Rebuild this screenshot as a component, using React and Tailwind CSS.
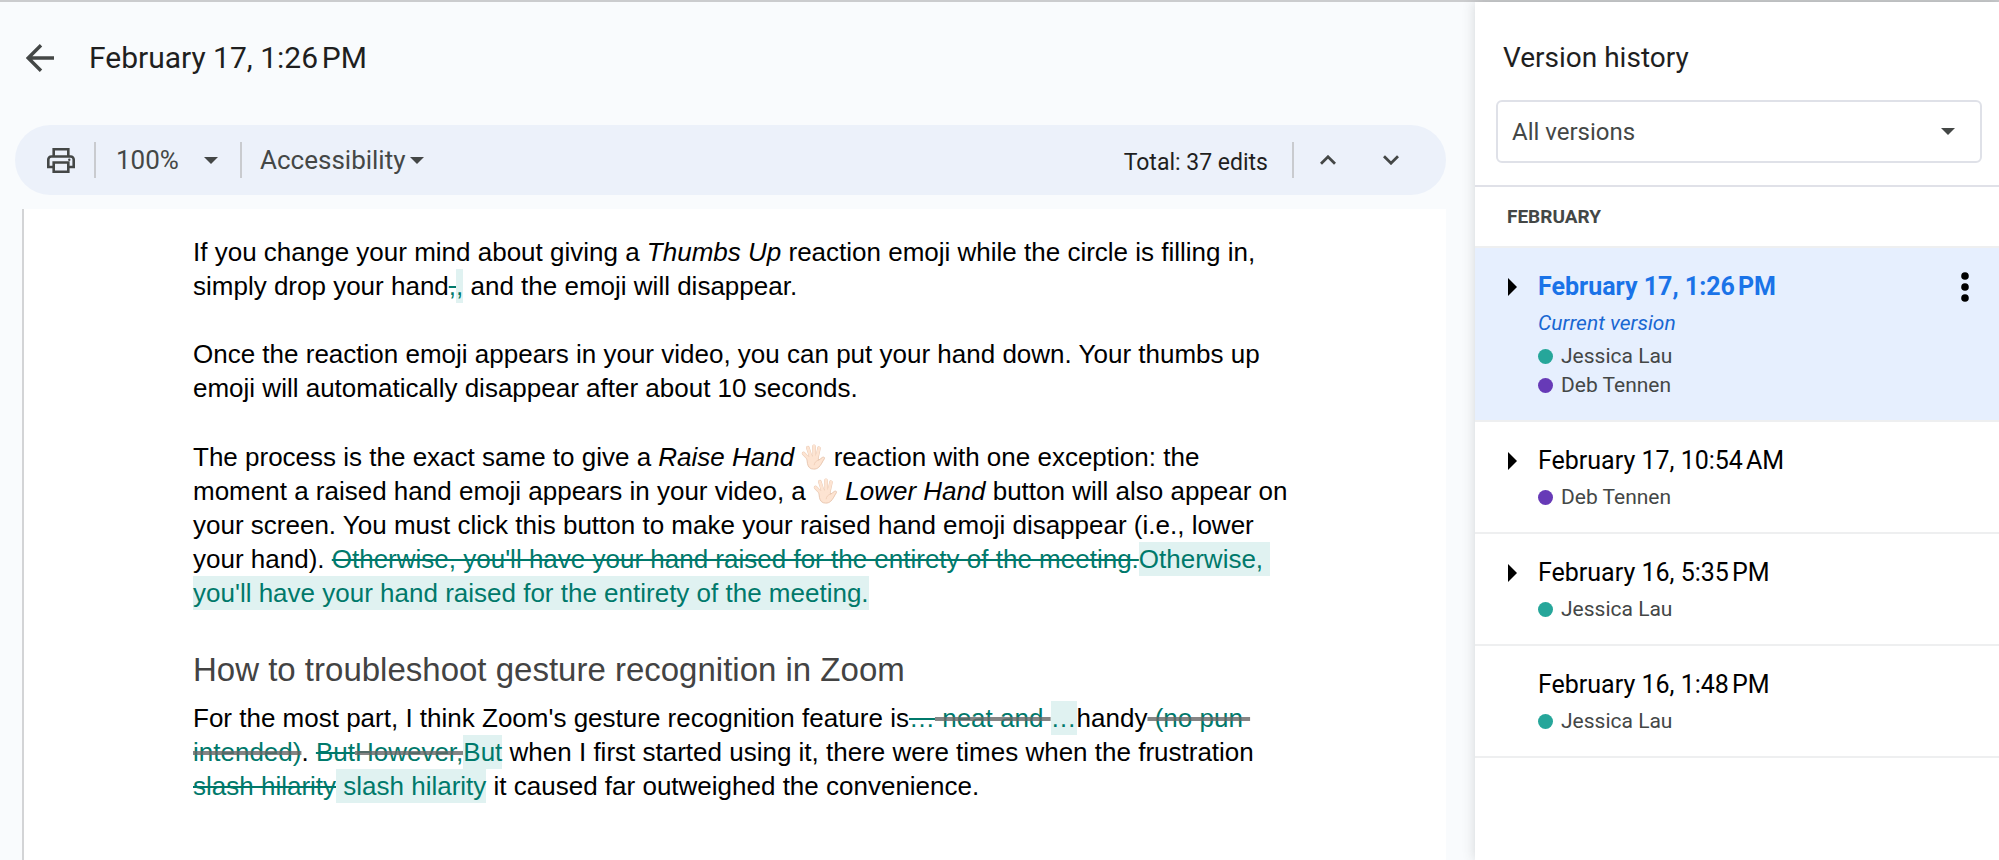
const uiFont = "font-['Roboto',sans-serif]";
const docFont = "font-['Liberation_Sans',Arial,sans-serif]";

const TEAL = "#26a69a";
const PURPLE = "#673ab7";

const versions = [
  { title: "February 17, 1:26\u202fPM", current: true, expandable: true, people: [["Jessica Lau", TEAL], ["Deb Tennen", PURPLE]] },
  { title: "February 17, 10:54\u202fAM", expandable: true, people: [["Deb Tennen", PURPLE]] },
  { title: "February 16, 5:35\u202fPM", expandable: true, people: [["Jessica Lau", TEAL]] },
  { title: "February 16, 1:48\u202fPM", expandable: false, people: [["Jessica Lau", TEAL]] },
];

function Caret({ className = "" }) {
  return (
    <svg viewBox="0 0 14 7" className={`h-[7px] w-[14px] shrink-0 ${className}`} fill="#444746" aria-hidden="true">
      <path d="M0 0h14L7 7z" />
    </svg>
  );
}

function Hand() {
  return (
    <svg viewBox="0 0 25 26" className="inline-block h-[26px] w-[25px] align-[-4px]" role="img" aria-label="raised hand">
      <g stroke="#e9c8b2" strokeLinecap="round" strokeLinejoin="round" fill="none">
        <path d="M7 14 2.600 9.400M9.500 12 6.800 3.600M13.200 11.500 13 2.200M16.200 12.500 18 4.200" strokeWidth="3.600" />
        <path d="M6 12.500 16.500 11.500 17.600 16.200C19 15.600 20.200 13.800 21.600 13.300c1.400-.5 2.500.4 1.800 1.400-1.900 2.700-3.200 6.300-5.600 8.500-1.500 1.400-3.200 1.900-5.100 1.900-3.600 0-5.600-2-6.200-5.400z" strokeWidth="1" fill="#fde4d2" />
      </g>
      <g stroke="#fde4d2" strokeLinecap="round" fill="none">
        <path d="M8 15 2.600 9.400M10 13.500 6.800 3.600M13.200 13.500 13 2.200M15.800 13.500 18 4.200" strokeWidth="2.800" />
      </g>
      <path d="M13.200 20.800c.3-2.300 1.700-4 4.300-4.700" fill="none" stroke="#ecc9b0" strokeWidth=".7" strokeLinecap="round" />
    </svg>
  );
}

function Divider() {
  return <span className="h-9 w-[2px] shrink-0 bg-[#c9cbcf]" aria-hidden="true" />;
}

function Ins({ children }) {
  return <ins className="bg-[#e0f2f1] py-[2px] text-[#00796b] no-underline">{children}</ins>;
}

function Del({ children, heavy }) {
  return heavy ? (
    <del className="text-[#00796b] line-through decoration-[#666666]/80 decoration-4">{children}</del>
  ) : (
    <del className="text-[#00796b] line-through decoration-[#00796b] decoration-2">{children}</del>
  );
}

function Toolbar() {
  return (
    <div role="toolbar" className="mr-[29px] ml-[15px] flex h-[70px] items-center rounded-full bg-[#ecf1fa] text-[26px] text-[#444746]">
      <button type="button" aria-label="Print" className="ml-8">
        <svg viewBox="0 0 28 25" className="h-[25px] w-7" fill="none" stroke="#444746" strokeWidth="2.600" aria-hidden="true">
          <path d="M6.700 8V1.300h14.600V8" />
          <path d="M6.500 19H1.300v-7.500a3 3 0 0 1 3-3h19.400a3 3 0 0 1 3 3V19h-5.200" />
          <path d="M6.700 14.500h14.600v9.200H6.700z" />
          <circle cx="22.300" cy="11.800" r="1.200" fill="#444746" stroke="none" />
        </svg>
      </button>
      <span className="ml-[19px] flex"><Divider /></span>
      <button type="button" aria-label="Zoom level" className="ml-5 flex items-center gap-5">
        <span className="w-[68px] text-left">100%</span>
        <Caret />
      </button>
      <span className="ml-[22px] flex"><Divider /></span>
      <button type="button" className="ml-[18px] flex items-center gap-1">
        Accessibility
        <Caret />
      </button>
      <span className="mt-1.5 ml-auto text-[23px] text-[#1f1f1f]">Total: 37 edits</span>
      <span className="ml-6 flex"><Divider /></span>
      <button type="button" aria-label="Previous edit" className="ml-[26px]">
        <svg viewBox="0 0 16 10" className="h-[10px] w-4" fill="none" stroke="#444746" strokeWidth="2.800" aria-hidden="true">
          <path d="M1 8.700 8 1.800l7 6.900" />
        </svg>
      </button>
      <button type="button" aria-label="Next edit" className="mr-[47px] ml-[47px]">
        <svg viewBox="0 0 16 10" className="h-[10px] w-4" fill="none" stroke="#444746" strokeWidth="2.800" aria-hidden="true">
          <path d="M1 1.300 8 8.200l7-6.900" />
        </svg>
      </button>
    </div>
  );
}

function Document() {
  return (
    <article className={`mt-[14px] mr-[29px] ml-[22px] grow border-l-2 border-[#d3d4d6] bg-white pt-[26px] pr-16 pl-[169px] text-[26px] leading-[34px] text-black ${docFont}`}>
      <div className="max-w-[1110px] whitespace-break-spaces">
        <p className="mb-[34px]">
          If you change your mind about giving a <em>Thumbs Up</em> reaction emoji while the circle is filling in, simply drop your hand<Del>,</Del><Ins>,</Ins> and the emoji will disappear.
        </p>
        <p className="mb-[35px]">
          Once the reaction emoji appears in your video, you can put your hand down. Your thumbs up emoji will automatically disappear after about 10 seconds.
        </p>
        <p>
          The process is the exact same to give a <em>Raise Hand</em> <Hand /> reaction with one exception: the moment a raised hand emoji appears in your video, a <Hand /> <em>Lower Hand</em> button will also appear on your screen. You must click this button to make your raised hand emoji disappear (i.e., lower your hand). <Del>Otherwise, you'll have your hand raised for the entirety of the meeting.</Del><Ins>Otherwise, you'll have your hand raised for the entirety of the meeting.</Ins>
        </p>
        <h2 className="mt-[38px] mb-[9px] text-[33px] leading-[44px] text-[#434343]">How to troubleshoot gesture recognition in Zoom</h2>
        <p>
          For the most part, I think Zoom's gesture recognition feature is<Del>…</Del><Del heavy> neat and </Del><Ins>…</Ins>handy<Del heavy> (no pun intended)</Del>. <Del>But</Del><Del heavy>However,</Del><Ins>But</Ins> when I first started using it, there were times when the frustration <Del>slash hilarity</Del><Ins> slash hilarity</Ins> it caused far outweighed the convenience.
        </p>
      </div>
    </article>
  );
}

function Version({ title, current, expandable, people }) {
  return (
    <li className={`flex items-start border-b-2 border-[#eeeff0] pt-[23px] pl-[33px] pb-5 ${current ? "bg-[#e6effe]" : ""}`}>
      <div className="flex h-8 w-[30px] shrink-0 items-center">
        {expandable && (
          <button type="button" aria-label="Expand version">
            <svg viewBox="0 0 9 18" className="h-[18px] w-[9px]" aria-hidden="true">
              <path d="M0 0v18l9-9z" />
            </svg>
          </button>
        )}
      </div>
      <div className="grow">
        <h3 className={`text-[25px] leading-8 ${current ? "font-bold text-[#1a73e8]" : "font-normal text-black"}`}>{title}</h3>
        {current && <p className="mt-1 text-[21px] leading-8 text-[#1967d2] italic">Current version</p>}
        <ul className={`text-[21px] text-[#444746] ${current ? "mt-[3px]" : "mt-[6px]"}`}>
          {people.map(([name, color]) => (
            <li key={name} className="flex h-[29px] items-center gap-2">
              <span className="size-[15px] rounded-full" style={{ backgroundColor: color }} />
              {name}
            </li>
          ))}
        </ul>
      </div>
      {current && (
        <button type="button" aria-label="More actions" className="mr-[30px] flex h-8 items-center">
          <svg viewBox="0 0 8 30" className="h-[30px] w-2" aria-hidden="true">
            <circle cx="4" cy="4" r="3.800" />
            <circle cx="4" cy="15" r="3.800" />
            <circle cx="4" cy="26" r="3.800" />
          </svg>
        </button>
      )}
    </li>
  );
}

export default function App() {
  return (
    <div className={`flex min-h-screen border-t-2 border-[#cbccce] bg-[#f9fbfd] ${uiFont}`}>
      <main className="flex min-w-0 grow flex-col">
        <header className="flex h-[123px] items-start pt-9 pl-[26px]">
          <button type="button" aria-label="Back" className="flex h-10 items-center">
            <svg viewBox="0 0 28 28" className="size-7" fill="none" stroke="#444746" strokeWidth="3.400" aria-hidden="true">
              <path d="M28 14H2.500M15 1.200 2.200 14 15 26.800" />
            </svg>
          </button>
          <h1 className="ml-[35px] text-[30px] leading-10 text-[#1f1f1f]">February 17, 1:26&#8239;PM</h1>
        </header>
        <Toolbar />
        <Document />
      </main>
      <aside className="w-[524px] shrink-0 bg-white shadow-[0_0_12px_rgba(60,64,67,0.2)]">
        <h2 className="px-7 pt-9 text-[28px] leading-10 text-[#1f1f1f]">Version history</h2>
        <div className="mt-[22px] mr-[17px] mb-[22px] ml-[21px] flex items-center">
          <select aria-label="Filter versions" className="h-[63px] w-full shrink-0 appearance-none rounded-md border-2 border-[#dfe1e8] bg-white px-[14px] text-[24px] text-[#444746]">
            <option>All versions</option>
          </select>
          <Caret className="pointer-events-none -ml-[41px]" />
        </div>
        <h3 className="border-y-2 border-t-[#e0e1e8] border-b-[#eeeff0] px-8 py-[14px] text-[19px] leading-[31px] font-bold text-[#444746]">FEBRUARY</h3>
        <ul>
          {versions.map((v) => (
            <Version key={v.title} {...v} />
          ))}
        </ul>
      </aside>
    </div>
  );
}
